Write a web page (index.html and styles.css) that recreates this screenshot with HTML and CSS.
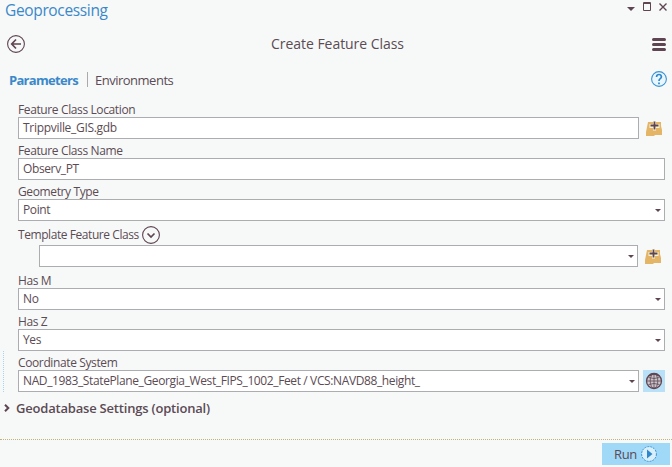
FILE: index.html
```
<!DOCTYPE html>
<html lang="en">
<head>
<meta charset="utf-8">
<title>Geoprocessing</title>
<link rel="stylesheet" href="styles.css">
</head>
<body>
<svg width="0" height="0" class="defs">
  <defs>
    <symbol id="folder" viewBox="0 0 17 15">
      <path d="M2 1h13v4l1 4v5H9l-1 1H0v-4l1-5z" fill="#e5b567"/>
      <path d="M7 0h3v3h3.500v4H10v2.500H7V7H3.500V3H7z" fill="#fbf3d2"/>
      <path d="M8.500 0.500v8M4.500 4.500h8" stroke="#5f4452" stroke-width="1.800"/>
    </symbol>
  </defs>
</svg>
<main class="pane">
  <header class="titlebar">
    <h1>Geoprocessing</h1>
    <div class="window-buttons">
      <svg width="46" height="14" viewBox="0 0 46 14">
        <path d="M3 7h8L7 11z" fill="#5f4452"/>
        <path d="M19.500 2.500h7v8h-7zM19 3.500h8" fill="none" stroke="#5f4452"/>
        <path d="M35.500 3.500l7 7M42.500 3.500l-7 7" stroke="#5f4452" stroke-width="1.400"/>
      </svg>
    </div>
  </header>
  <div class="toolbar">
    <svg class="back" width="18" height="18" viewBox="0 0 18 18" fill="none" stroke="#5f4452">
      <circle cx="9" cy="9" r="8.400" stroke-width="1.100"/>
      <path d="M5 9h9M9 4.500L4.700 9 9 13.500" stroke-width="1.700"/>
    </svg>
    <h2>Create Feature Class</h2>
    <svg class="menu" width="14" height="13" viewBox="0 0 14 13" stroke="#5f4452" stroke-width="3" stroke-linecap="round">
      <path d="M1.500 1.500h11M1.500 6.500h11M1.500 11.500h11"/>
    </svg>
  </div>
  <nav class="tabs">
    <span class="tab active">Parameters</span>
    <span class="tab">Environments</span>
    <svg class="help" width="16" height="16" viewBox="0 0 16 16" fill="none">
      <circle cx="8" cy="8" r="7.400" fill="#e9f6fd" stroke="#3b93d3" stroke-width="1.100"/>
      <path d="M5.600 6V5.500Q5.800 3.500 8 3.500t2.400 2.200Q10.400 7 9 7.900 8 8.600 8 10M8 11.500v1.700" stroke="#2f86ca" stroke-width="1.700"/>
    </svg>
  </nav>
  <form class="form">
    <div class="field">
      <label>Feature Class Location</label>
      <div class="line"><div class="box path">Trippville_GIS.gdb</div><svg class="folder" width="17" height="15"><use href="#folder"/></svg></div>
    </div>
    <div class="field">
      <label>Feature Class Name</label>
      <div class="line"><div class="box">Observ_PT</div></div>
    </div>
    <div class="field">
      <label>Geometry Type</label>
      <div class="line"><div class="box select">Point</div></div>
    </div>
    <div class="field template">
      <label>Template Feature Class
        <svg width="18" height="18" viewBox="0 0 18 18" fill="none" stroke="#5f4452"><circle cx="9" cy="9" r="8.400" stroke-width="1.100"/><path d="M5.500 7.500L9 11l3.500-3.500" stroke-width="1.700"/></svg>
      </label>
      <div class="line"><div class="box select"></div><svg class="folder" width="17" height="15"><use href="#folder"/></svg></div>
    </div>
    <div class="field has-m">
      <label>Has M</label>
      <div class="line"><div class="box select">No</div></div>
    </div>
    <div class="field">
      <label>Has Z</label>
      <div class="line"><div class="box select">Yes</div></div>
    </div>
    <div class="field coordinate">
      <label>Coordinate System</label>
      <div class="line"><div class="box select">NAD_1983_StatePlane_Georgia_West_FIPS_1002_Feet / VCS:NAVD88_height_</div>
        <div class="globe"><svg width="18" height="18" viewBox="0 0 18 18" fill="none">
          <circle cx="9" cy="9" r="7.500" fill="#c9c6cb" stroke="#5f4452" stroke-width="1.300"/>
          <path d="M9 2v14M2 9h14M3.500 5.500q5.500 2 11 0M3.500 12.500q5.500-2 11 0" stroke="#5f4452" stroke-width=".8"/>
          <ellipse cx="9" cy="9" rx="3.800" ry="7.300" stroke="#5f4452" stroke-width=".8"/>
          <path d="M4 4q5-4 10 0" stroke="#5f4452" stroke-width="1.500"/>
        </svg></div>
      </div>
    </div>
  </form>
  <div class="settings">
    <svg width="6" height="8" viewBox="0 0 6 8" fill="none" stroke="#5f4452" stroke-width="2"><path d="M1 .7L4.300 4 1 7.300"/></svg>
    <span>Geodatabase Settings (optional)</span>
  </div>
  <footer class="footer">
    <div class="run"><span>Run</span>
      <svg width="16" height="16" viewBox="0 0 16 16"><circle cx="8" cy="8" r="7.400" fill="#d9f0fc" stroke="#3b93d3" stroke-dasharray="2 1"/><path d="M6 3.500l5.500 4.500L6 12.500z" fill="#2f86ca"/></svg>
    </div>
  </footer>
</main>
</body>
</html>
```
FILE: styles.css
```
* { box-sizing: border-box; }
body {
  margin: 0;
  background: #f7f9f9;
  color: #5b4b54;
  font: 12px/16px "Open Sans", "Noto Sans", sans-serif;
  letter-spacing: -0.38px;
}
svg { display: block; flex: none; }
.defs { position: absolute; }
.pane { width: 672px; height: 467px; display: flex; flex-direction: column; }
h1, h2 { margin: 0; font-weight: 400; white-space: nowrap; }

.titlebar { height: 20px; display: flex; justify-content: space-between; padding-left: 5px; }
h1 { font-size: 15.5px; line-height: 21px; color: #3b88c9; letter-spacing: -0.35px; }
.window-buttons { width: 48px; }

.toolbar { height: 48px; display: flex; align-items: center; justify-content: space-between; padding: 0 6px 0 7px; }
h2 { font-size: 14px; line-height: 20px; letter-spacing: -0.05px; margin-right: 2px; }

.tabs { height: 30px; display: flex; padding: 3px 5px 0 9px; font-size: 13px; line-height: 18px; letter-spacing: -0.5px; }
.tab.active { width: 79px; height: 15px; line-height: 17px; margin-top: 1px; border-right: 1px solid #aaa; color: #3b88c9; font-weight: 700; letter-spacing: -0.7px; }
.tab + .tab { margin-left: 7px; }
.help { margin-left: auto; }

.form { margin: 0 7px 0 18px; }
.field label { display: flex; align-items: center; height: 19px; padding-top: 4px; white-space: nowrap; }
.line { display: flex; align-items: center; }
.box { flex: 1; height: 22px; border: 1px solid #abadb0; background: #fff; padding: 0 4px; line-height: 20px; white-space: nowrap; position: relative; }
.box.path { letter-spacing: -0.3px; }
.select::after { content: ""; position: absolute; right: 3px; top: 9px; border: 3.5px solid transparent; border-top-color: #5f4452; border-bottom: 0; }
.folder { margin: 0 2px 0 7px; }
.template label { height: 24px; padding-top: 3px; gap: 3px; letter-spacing: -0.43px; }
.template .line { padding-left: 21px; }
.template .folder { margin: 0 3px 0 7px; }
.has-m label { height: 21px; padding-top: 6px; }
.coordinate { margin-left: -15px; padding-left: 14px; border-left: 1px dotted #a6d5ee; }
.globe { width: 22px; height: 22px; margin-left: 4px; background: #b8e0f7; display: grid; place-items: center; }

.settings { height: 47px; padding: 7px 0 0 4px; display: flex; gap: 6px; font-size: 13px; line-height: 19px; font-weight: 600; letter-spacing: -0.2px; }
.settings svg { margin-top: 5px; }
.footer { height: 28px; border-top: 1px dotted #c3b27a; display: flex; justify-content: flex-end; padding: 3px 2px 0 0; }
.run { width: 68px; height: 22px; background: #a0d8f8; display: flex; align-items: center; justify-content: space-between; padding: 0 13px 0 12px; font-size: 13px; }
```
